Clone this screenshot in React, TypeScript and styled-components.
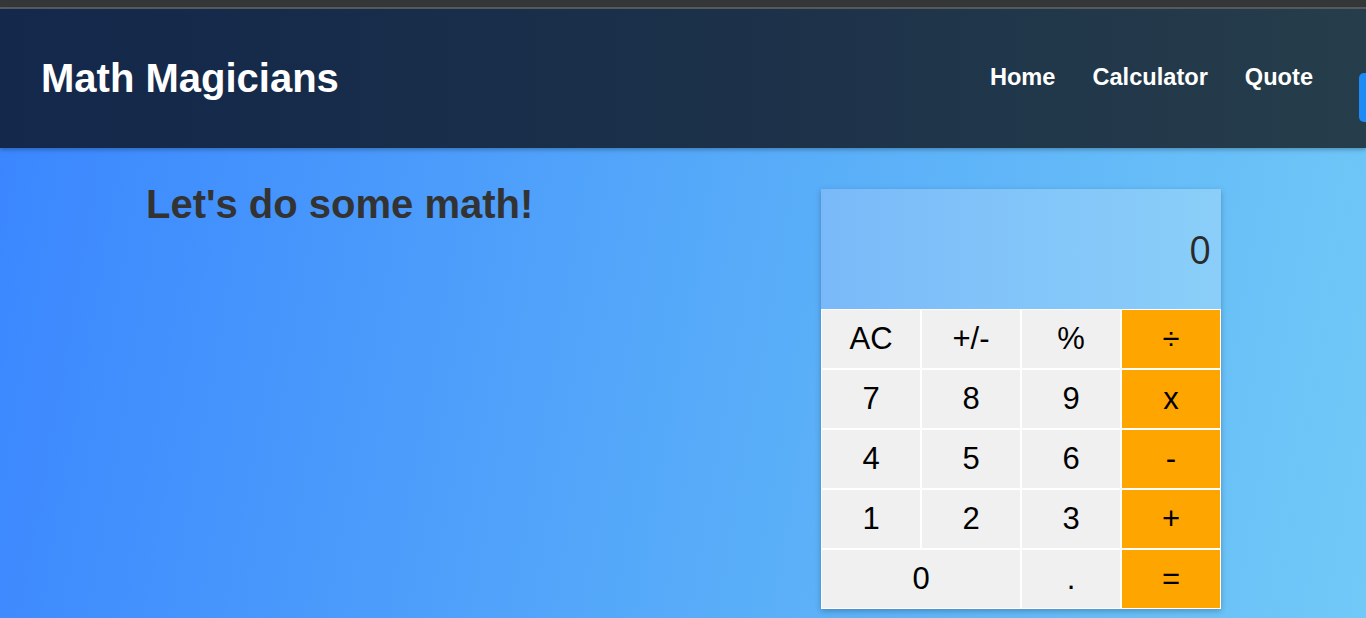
import React from "react";
import styled, { createGlobalStyle } from "styled-components";

const Global = createGlobalStyle`
  html, body { margin: 0; padding: 0; }
  body {
    font-family: "Liberation Sans", Arial, sans-serif;
    background: linear-gradient(100deg, #3a85ff 0%, #55a9f9 50%, #70c9f7 100%);
    min-height: 618px;
    overflow: hidden;
  }
`;

const Page = styled.div`
  width: 1366px;
  height: 618px;
  display: flex;
  flex-direction: column;
  overflow: hidden;
`;

const Chrome = styled.div`
  height: 7px;
  background: #353638;
  border-bottom: 2px solid #5a5b5d;
  flex-shrink: 0;
`;

const Header = styled.header`
  height: 139px;
  flex-shrink: 0;
  display: flex;
  align-items: center;
  justify-content: space-between;
  padding-left: 41px;
  background: linear-gradient(90deg, #13284b 0%, #1b3049 50%, #263d4b 100%);
  box-shadow: 0 2px 4px rgba(0, 0, 0, 0.25);
  position: relative;
  z-index: 1;
`;

const Title = styled.h1`
  margin: 0;
  color: #ffffff;
  font-size: 40px;
  font-weight: 700;
`;

const Nav = styled.nav`
  display: flex;
  align-items: center;
  gap: 37px;
  height: 100%;
`;

const NavLink = styled.a`
  color: #ffffff;
  font-size: 23.6px;
  font-weight: 700;
  text-decoration: none;
  margin-top: -2px;
`;

const Tab = styled.div`
  width: 7px;
  height: 49px;
  margin-left: 9px;
  margin-top: 38px;
  background: #1d8af5;
  border-radius: 5px 0 0 5px;
`;

const Main = styled.main`
  flex: 1;
  display: flex;
  justify-content: space-between;
  align-items: flex-start;
  padding: 34px 145px 0 146px;
`;

const Heading = styled.h2`
  margin: 0;
  color: #333333;
  font-size: 40px;
  font-weight: 700;
`;

const Calculator = styled.div`
  width: 400px;
  margin-top: 7px;
  box-shadow: 0 2px 6px rgba(0, 0, 0, 0.25);
`;

const Display = styled.div`
  height: 120px;
  display: flex;
  align-items: center;
  justify-content: flex-end;
  padding-right: 10px;
  box-sizing: border-box;
  background: linear-gradient(90deg, #7ab9f9 0%, #82c5f9 50%, #8acef9 100%);
  color: #2a2a2a;
  font-family: "Open Sans", "Noto Sans", sans-serif;
  font-size: 38px;
`;

const Keys = styled.div`
  display: grid;
  grid-template-columns: repeat(4, 100px);
  grid-auto-rows: 60px;
`;

const Key = styled.button<{ $op?: boolean; $wide?: boolean }>`
  box-sizing: border-box;
  border: 1px solid #ffffff;
  margin: 0;
  padding: 0;
  background: ${(p) => (p.$op ? "#ffa500" : "#f0f0f0")};
  color: #000000;
  font-family: "Liberation Sans", Arial, sans-serif;
  font-size: 31px;
  grid-column: ${(p) => (p.$wide ? "span 2" : "auto")};
  cursor: pointer;
`;

const keys: { label: string; op?: boolean; wide?: boolean }[] = [
  { label: "AC" },
  { label: "+/-" },
  { label: "%" },
  { label: "÷", op: true },
  { label: "7" },
  { label: "8" },
  { label: "9" },
  { label: "x", op: true },
  { label: "4" },
  { label: "5" },
  { label: "6" },
  { label: "-", op: true },
  { label: "1" },
  { label: "2" },
  { label: "3" },
  { label: "+", op: true },
  { label: "0", wide: true },
  { label: "." },
  { label: "=", op: true },
];

export default function App() {
  return (
    <Page>
      <Global />
      <Chrome />
      <Header>
        <Title>Math Magicians</Title>
        <Nav>
          <NavLink href="#">Home</NavLink>
          <NavLink href="#">Calculator</NavLink>
          <NavLink href="#">Quote</NavLink>
          <Tab />
        </Nav>
      </Header>
      <Main>
        <Heading>Let's do some math!</Heading>
        <Calculator>
          <Display>0</Display>
          <Keys>
            {keys.map((k) => (
              <Key key={k.label} $op={k.op} $wide={k.wide}>
                {k.label}
              </Key>
            ))}
          </Keys>
        </Calculator>
      </Main>
    </Page>
  );
}
